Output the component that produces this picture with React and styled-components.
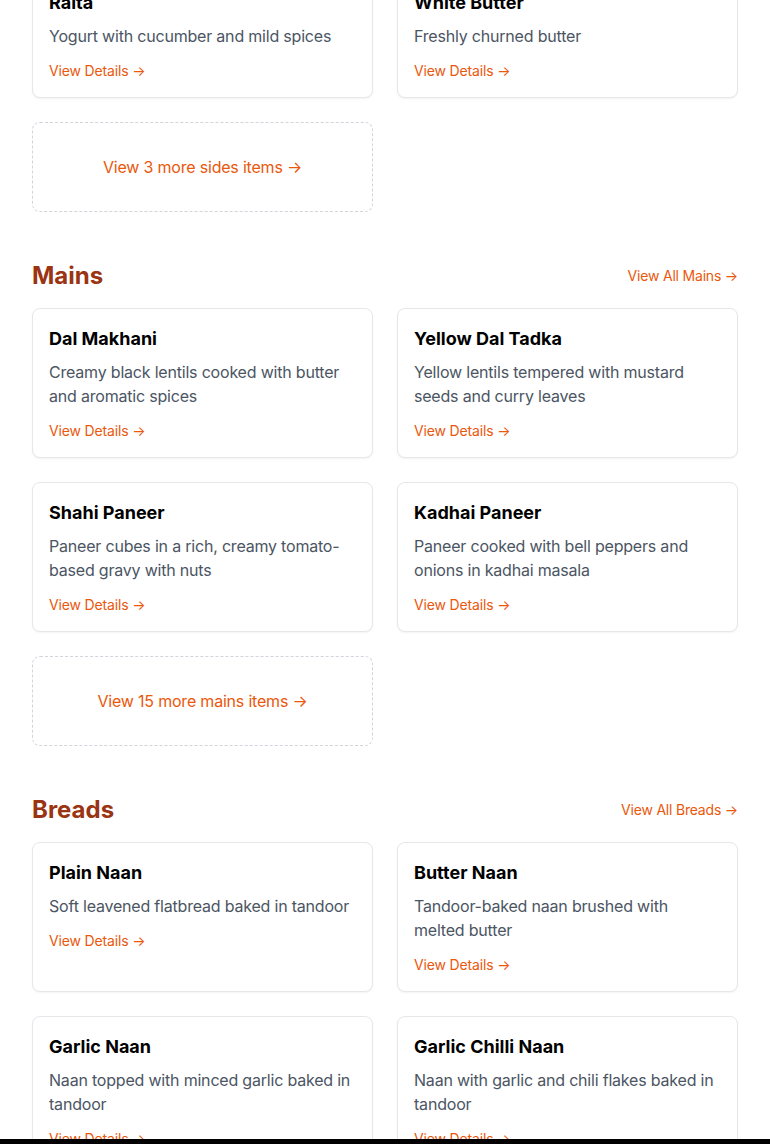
import React from "react";
import styled, { createGlobalStyle } from "styled-components";

const GlobalStyle = createGlobalStyle`
  * { box-sizing: border-box; }
  html, body { margin: 0; padding: 0; background: #ffffff; }
  body { font-family: Inter, "Noto Sans", Arial, sans-serif; color: #111827; }
`;

const Page = styled.main`
  margin-top: -28px;
  padding: 0 32px 48px;
  display: flex;
  flex-direction: column;
  gap: 48px;
`;

const Section = styled.section`
  display: flex;
  flex-direction: column;
`;

const SectionHeader = styled.div`
  display: flex;
  justify-content: space-between;
  align-items: center;
  margin-bottom: 16px;
`;

const SectionTitle = styled.h2`
  margin: 0;
  font-size: 24px;
  line-height: 32px;
  font-weight: 700;
  color: #9a3412;
`;

const ViewAll = styled.a`
  font-size: 14px;
  line-height: 20px;
  letter-spacing: -0.2px;
  color: #ea580c;
  text-decoration: none;
`;

const Grid = styled.div`
  display: grid;
  grid-template-columns: 1fr 1fr;
  gap: 24px;
`;

const Card = styled.div`
  border: 1px solid #e5e7eb;
  border-radius: 8px;
  background: #fff;
  box-shadow: 0 1px 2px rgba(0, 0, 0, 0.05);
  padding: 16px;
  display: flex;
  flex-direction: column;
  align-items: flex-start;
`;

const CardTitle = styled.h3`
  margin: 0 0 7px;
  font-size: 18px;
  line-height: 28px;
  font-weight: 700;
  color: #000;
`;

const CardDesc = styled.p`
  margin: 0 0 13px;
  font-size: 16px;
  line-height: 24px;
  letter-spacing: -0.2px;
  color: #4b5563;
`;

const DetailsLink = styled.a`
  font-size: 14px;
  line-height: 20px;
  letter-spacing: -0.15px;
  color: #ea580c;
  text-decoration: none;
`;

const MoreBox = styled.a`
  border: 1px dashed #d1d5db;
  border-radius: 8px;
  padding: 32px 16px;
  display: flex;
  justify-content: center;
  align-items: center;
  font-size: 16px;
  line-height: 24px;
  letter-spacing: -0.2px;
  color: #ea580c;
  text-decoration: none;
`;

const BottomBar = styled.div`
  position: fixed;
  left: 0;
  right: 0;
  bottom: 0;
  height: 5px;
  background: #000;
`;

const sides = [
  { name: "Raita", desc: "Yogurt with cucumber and mild spices" },
  { name: "White Butter", desc: "Freshly churned butter" },
];

const sections = [
  {
    title: "Mains",
    key: "mains",
    more: 15,
    items: [
      { name: "Dal Makhani", desc: "Creamy black lentils cooked with butter and aromatic spices" },
      { name: "Yellow Dal Tadka", desc: "Yellow lentils tempered with mustard seeds and curry leaves" },
      { name: "Shahi Paneer", desc: "Paneer cubes in a rich, creamy tomato-based gravy with nuts" },
      { name: "Kadhai Paneer", desc: "Paneer cooked with bell peppers and onions in kadhai masala" },
    ],
  },
  {
    title: "Breads",
    key: "breads",
    more: null,
    items: [
      { name: "Plain Naan", desc: "Soft leavened flatbread baked in tandoor" },
      { name: "Butter Naan", desc: "Tandoor-baked naan brushed with melted butter" },
      { name: "Garlic Naan", desc: "Naan topped with minced garlic baked in tandoor" },
      { name: "Garlic Chilli Naan", desc: "Naan with garlic and chili flakes baked in tandoor" },
    ],
  },
];

function ItemCard({ item }) {
  return (
    <Card>
      <CardTitle>{item.name}</CardTitle>
      <CardDesc>{item.desc}</CardDesc>
      <DetailsLink href="#">View Details →</DetailsLink>
    </Card>
  );
}

export default function App() {
  return (
    <>
      <GlobalStyle />
      <Page>
        <Section>
          <Grid>
            {sides.map((it) => (
              <ItemCard key={it.name} item={it} />
            ))}
            <MoreBox href="#">View 3 more sides items →</MoreBox>
          </Grid>
        </Section>
        {sections.map((s) => (
          <Section key={s.key}>
            <SectionHeader>
              <SectionTitle>{s.title}</SectionTitle>
              <ViewAll href="#">View All {s.title} →</ViewAll>
            </SectionHeader>
            <Grid>
              {s.items.map((it) => (
                <ItemCard key={it.name} item={it} />
              ))}
              {s.more ? (
                <MoreBox href="#">View {s.more} more {s.key} items →</MoreBox>
              ) : null}
            </Grid>
          </Section>
        ))}
      </Page>
      <BottomBar />
    </>
  );
}
